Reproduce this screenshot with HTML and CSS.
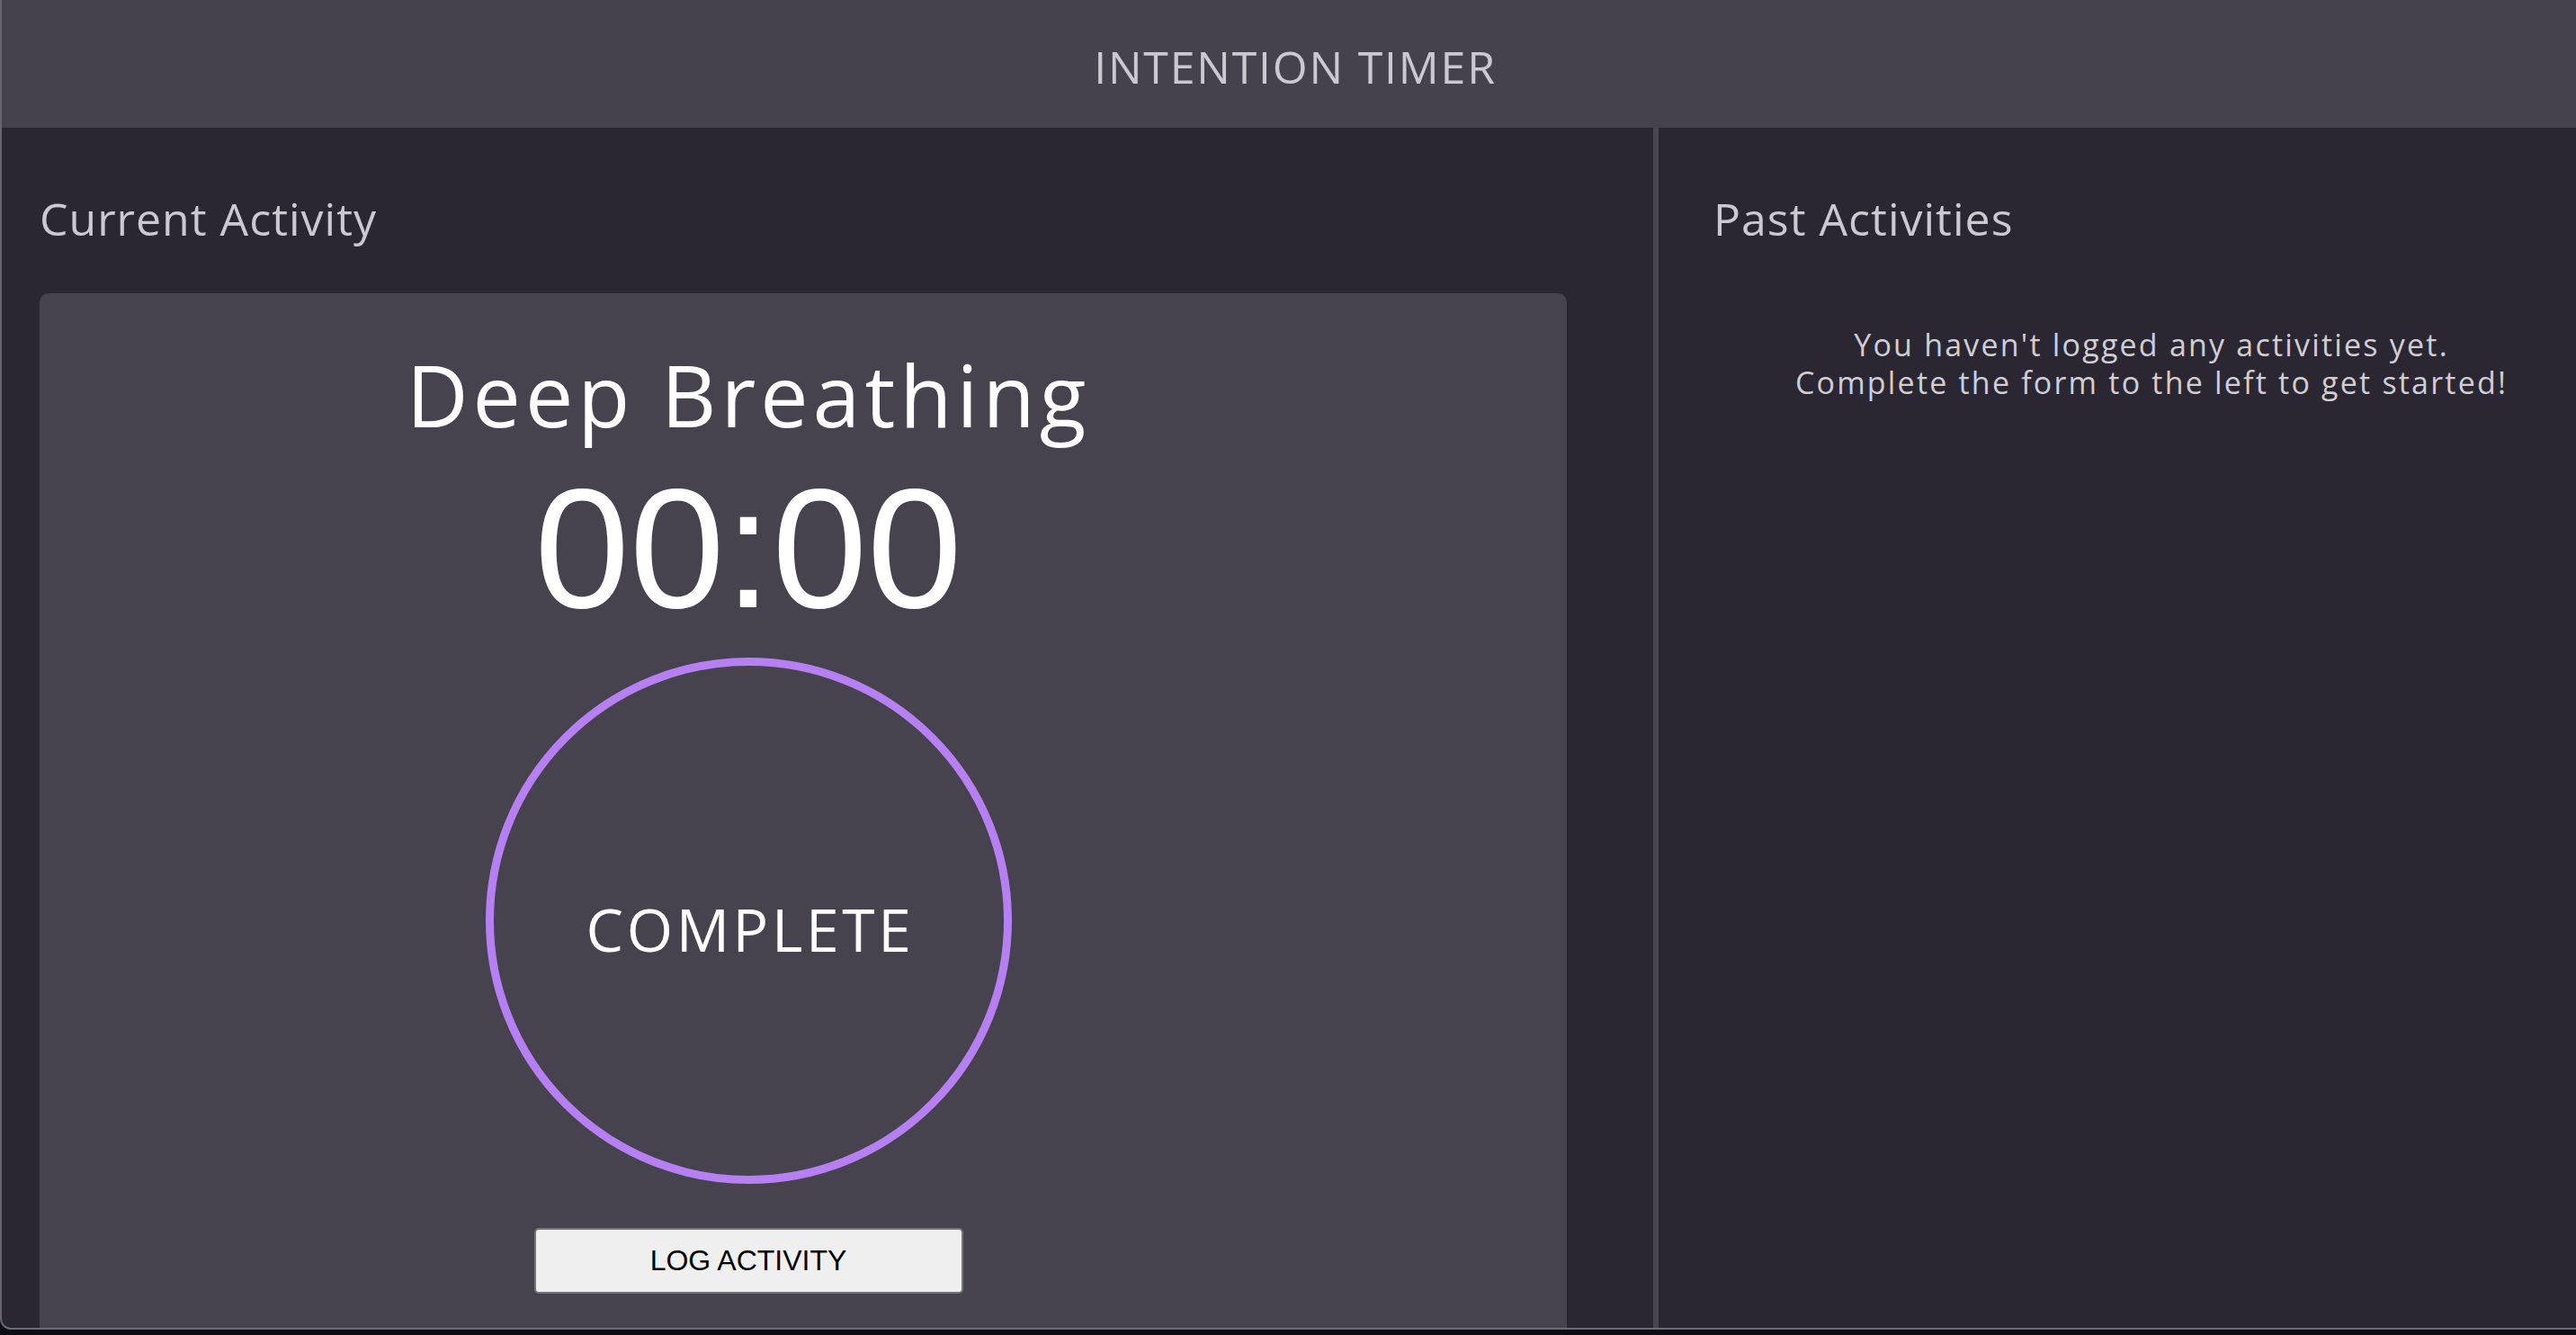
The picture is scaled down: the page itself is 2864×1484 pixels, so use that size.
FILE: index.html
```html
<!DOCTYPE html>
<html lang="en">
<head>
<meta charset="utf-8">
<title>Intention Timer</title>
<link rel="stylesheet" href="styles.css">
</head>
<body>
<div class="window">
  <header class="header">
    <h1 class="title">INTENTION TIMER</h1>
  </header>
  <main class="main">
    <section class="current">
      <h2 class="heading">Current Activity</h2>
      <div class="card">
        <div class="card-inner">
          <p class="activity-name">Deep Breathing</p>
          <p class="clock">00:00</p>
          <div class="ring"><span class="ring-label">COMPLETE</span></div>
          <button class="log-btn" type="button">LOG ACTIVITY</button>
        </div>
      </div>
    </section>
    <section class="past">
      <h2 class="heading">Past Activities</h2>
      <p class="empty">You haven't logged any activities yet.<br>Complete the form to the left to get started!</p>
    </section>
  </main>
</div>
</body>
</html>
```

FILE: styles.css
```css
* { box-sizing: border-box; }
html, body { margin: 0; padding: 0; }
body {
  background: #0b0d13;
  width: 2864px;
  height: 1484px;
  overflow: hidden;
  font-family: "Open Sans", "Noto Sans", sans-serif;
}
.window {
  height: 1478px;
  background: #2a2732;
  border-left: 2px solid #67646d;
  border-bottom: 2px solid #6e6b74;
  border-bottom-left-radius: 12px;
  overflow: hidden;
  display: flex;
  flex-direction: column;
}
.header {
  height: 142px;
  flex: none;
  background: #45424d;
  display: flex;
  align-items: center;
  justify-content: center;
  padding-top: 6px;
}
.title {
  margin: 0 0 0 14px;
  font-weight: 400;
  font-size: 50px;
  line-height: 1;
  letter-spacing: 1.8px;
  color: #cbc8d0;
}
.main {
  flex: 1;
  display: flex;
  min-height: 0;
}
.current {
  width: 1836px;
  flex: none;
  padding: 76px 0 0 42px;
}
.past {
  flex: 1;
  border-left: 6px solid #48454f;
  padding: 76px 0 0 61px;
}
.heading {
  margin: 0;
  font-weight: 400;
  font-size: 50px;
  line-height: 1;
  letter-spacing: 1px;
  color: #cbc8d0;
}
.card {
  margin-top: 58px;
  width: 1698px;
  height: 1200px;
  background: #46434e;
  border-radius: 10px;
}
.card-inner {
  width: 1576px;
  padding-top: 65px;
  display: flex;
  flex-direction: column;
  align-items: center;
}
.activity-name {
  margin: 0;
  font-size: 95px;
  line-height: 1;
  letter-spacing: 5px;
  color: #ffffff;
}
.clock {
  margin: 28px 0 0;
  font-family: "Liberation Sans", Arial, sans-serif;
  font-size: 190px;
  line-height: 1;
  color: #ffffff;
}
.ring {
  margin-top: 27px;
  width: 585px;
  height: 585px;
  border: 9px solid #b67ff2;
  border-radius: 50%;
  display: flex;
  align-items: center;
  justify-content: center;
  padding-top: 16px;
}
.ring-label {
  font-size: 66px;
  line-height: 1;
  letter-spacing: 3.6px;
  color: #ffffff;
  margin-left: 4px;
}
.log-btn {
  margin-top: 49px;
  width: 477px;
  height: 73px;
  background: #efefef;
  border: 2px solid #767676;
  border-radius: 5px;
  font-family: "Liberation Sans", Arial, sans-serif;
  font-size: 32px;
  color: #000000;
  padding: 0;
}
.empty {
  margin: 94px 0 0 15px;
  text-align: center;
  font-size: 34px;
  line-height: 42px;
  letter-spacing: 2.2px;
  color: #d0ced4;
}
```
